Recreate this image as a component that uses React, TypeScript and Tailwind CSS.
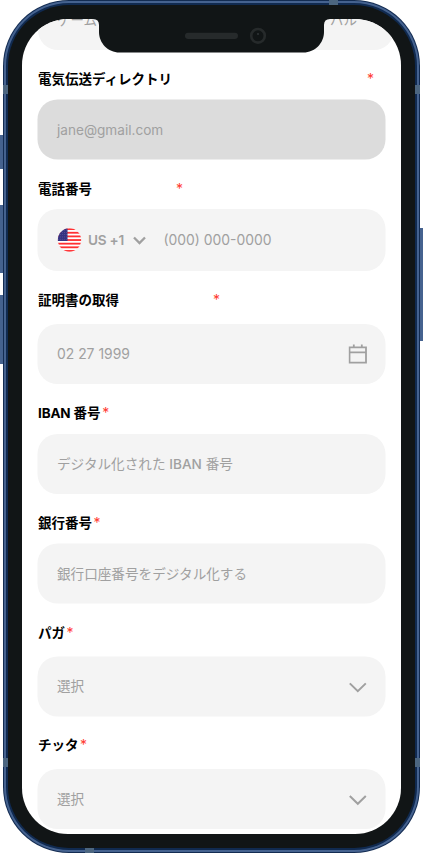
import type { ReactNode } from "react";

const FONT = "font-['Inter','Noto_Sans_CJK_JP',sans-serif]";

function Label({
  text,
  className,
  starClass,
  textClass = "",
}: {
  text: string;
  className: string;
  starClass: string;
  textClass?: string;
}) {
  return (
    <div className={`flex shrink-0 items-start ${className}`}>
      <span className={`text-[13.5px] leading-5 font-bold whitespace-nowrap text-black ${textClass}`}>{text}</span>
      <span className={`text-[14px] leading-5 text-[#ff3b30] ${starClass}`}>*</span>
    </div>
  );
}

function Field({ children, className = "h-[60px] bg-[#f4f4f4]" }: { children?: ReactNode; className?: string }) {
  return (
    <div
      className={`flex w-[348px] shrink-0 -translate-x-[0.5px] items-center rounded-[20px] pr-[18px] pl-[19.5px] text-[13.6px] leading-5 whitespace-nowrap text-[#a0a0a0] ${className}`}
    >
      {children}
    </div>
  );
}

function Chevron() {
  return (
    <svg className="mt-[2px] ml-auto h-[12px] w-[19px]" viewBox="0 0 19 12" fill="none">
      <path d="M1.3 2 L9.300 9.800 L17.300 2" stroke="#a0a0a0" strokeWidth="2" />
    </svg>
  );
}

function Calendar() {
  return (
    <svg className="ml-auto h-[20px] w-[19px]" viewBox="0 0 19 20" fill="none" stroke="#a0a0a0">
      <path d="M1 3.400h16.500v15.200h-16.500z" strokeWidth="1.800" />
      <path d="M1 8.400h16.500" strokeWidth="1.800" />
      <path d="M5.300 0.500v3M13.300 0.500v3" strokeWidth="1.800" />
    </svg>
  );
}

function Flag() {
  const stripes = [0, 1, 2, 3, 4, 5, 6];
  const rows = [0, 1, 2, 3, 4];
  return (
    <svg className="h-6 w-6 shrink-0" viewBox="0 0 24 24">
      <clipPath id="flag-disc">
        <circle cx="12" cy="12" r="11.7" />
      </clipPath>
      <g clipPath="url(#flag-disc)">
        <rect width="24" height="24" fill="#fff" />
        {stripes.map((i) => (
          <rect key={i} y={0.2 + i * 3.64} width="24" height="1.820" fill="#ff3033" />
        ))}
        <rect width="10" height="13" fill="#353181" />
        {rows.map((r) =>
          rows.map((c) => (
            <circle key={`${r}-${c}`} cx={1.3 + c * 2 - (r % 2) * 0.5} cy={2 + r * 2.3} r="0.4" fill="#8885b8" />
          )),
        )}
      </g>
    </svg>
  );
}

function Notch() {
  return (
    <svg className="absolute top-[18px] left-[93px] h-[36px] w-[237px]" viewBox="93 18 237 36">
      <path
        d="M93 18v1q6 0 6 6v7c0 11 9 20.5 20.5 20.5h184C315 52.500 324 43 324 32v-7q0-6 6-6v-1z"
        fill="#111516"
      />
      <rect x="185" y="32.700" width="53" height="6.300" rx="3.150" fill="#262a2b" />
      <circle cx="258" cy="35.800" r="6.800" fill="none" stroke="#262a2b" strokeWidth="2.600" />
      <circle cx="258" cy="34" r="1" fill="#303638" />
    </svg>
  );
}

export default function App() {
  return (
    <div className={`relative h-[853px] w-[423px] overflow-hidden bg-white ${FONT}`}>
      <div className="absolute top-[135px] left-0 h-[34px] w-[4px] bg-[#45628f]" />
      <div className="absolute top-[205px] left-0 h-[68px] w-[4px] bg-[#45628f]" />
      <div className="absolute top-[295px] left-0 h-[69px] w-[4px] bg-[#45628f]" />
      <div className="absolute top-[228px] right-0 h-[113px] w-[4px] bg-[#45628f]" />

      <div className="relative ml-[3px] h-[853px] w-[417px] rounded-[66px] bg-[#132c52] p-px">
        <div className="h-full rounded-[65px] bg-[#45628f] p-[2px]">
          <div className="h-full rounded-[63px] bg-[#102a50] p-[2px]">
            <div className="h-full rounded-[61px] bg-[#111516] p-[14px]">
              <div className="flex h-[815px] w-[379px] flex-col overflow-hidden rounded-[46px] bg-white pl-[16px]">
                <div className="-mt-[29px] flex h-[60px] w-[356px] shrink-0 items-center justify-between rounded-[20px] bg-[#f4f4f4] pr-[37px] pl-[19px] text-[13.500px] leading-5 text-[#a0a0a0]">
                  <span>ゲーム</span>
                  <span>バル</span>
                </div>
                <Label text="電気伝送ディレクトリ" className="h-[50px] pt-[19px]" starClass="ml-[195px]" />
                <Field className="h-[60px] -translate-y-[0.5px] bg-[#dcdcdc]">jane@gmail.com</Field>
                <Label text="電話番号" className="h-[49px] pt-[19px]" starClass="ml-[84px]" />
                <Field className="h-[62px] bg-[#f4f4f4]">
                  <Flag />
                  <span className="ml-[7px] font-semibold tracking-[-0.25px]">US +1</span>
                  <svg className="ml-[9px] h-[9px] w-[14px] shrink-0" viewBox="0 0 14 9" fill="none">
                    <path d="M1.500 1.500 L7 7 L12.500 1.500" stroke="#a0a0a0" strokeWidth="2.300" />
                  </svg>
                  <span className="ml-[16.5px] text-[13.9px]">(000) 000-0000</span>
                </Field>
                <Label text="証明書の取得" className="h-[53px] pt-[19px]" starClass="ml-[94px]" />
                <Field>
                  <span className="text-[13.9px]">02 27 1999</span>
                  <Calendar />
                </Field>
                <Label
                  text="IBAN 番号"
                  className="h-[50px] pt-[19px]"
                  textClass="tracking-[-0.15px]"
                  starClass="ml-[2px]"
                />
                <Field>
                  <span>
                    デジタル化された <span className="font-medium">IBAN</span> 番号
                  </span>
                </Field>
                <Label text="銀行番号" className="h-[50px] pt-[19px]" starClass="ml-[1.5px]" />
                <Field className="h-[60px] -translate-y-[0.5px] bg-[#f4f4f4]">銀行口座番号をデジタル化する</Field>
                <Label text="パガ" className="h-[53px] pt-[18.500px]" starClass="ml-[1.5px]" />
                <Field className="h-[60px] -translate-y-[0.600px] bg-[#f4f4f4]">
                  選択
                  <Chevron />
                </Field>
                <Label text="チッタ" className="h-[52px] pt-[18px]" starClass="ml-[1.5px]" />
                <Field>
                  選択
                  <Chevron />
                </Field>
              </div>
            </div>
          </div>
        </div>
      </div>

      <Notch />
      <div className="absolute top-0 left-[329px] h-[5px] w-[9px] bg-[#4c6680]" />
      <div className="absolute top-[85px] left-[3px] h-[9px] w-[5px] bg-[#4c6680]" />
      <div className="absolute top-[85px] left-[415px] h-[9px] w-[5px] bg-[#4c6680]" />
      <div className="absolute top-[758px] left-[3px] h-[9px] w-[5px] bg-[#4c6680]" />
      <div className="absolute top-[758px] left-[415px] h-[9px] w-[5px] bg-[#4c6680]" />
      <div className="absolute top-[848px] left-[85px] h-[5px] w-[9px] bg-[#4c6680]" />
    </div>
  );
}
